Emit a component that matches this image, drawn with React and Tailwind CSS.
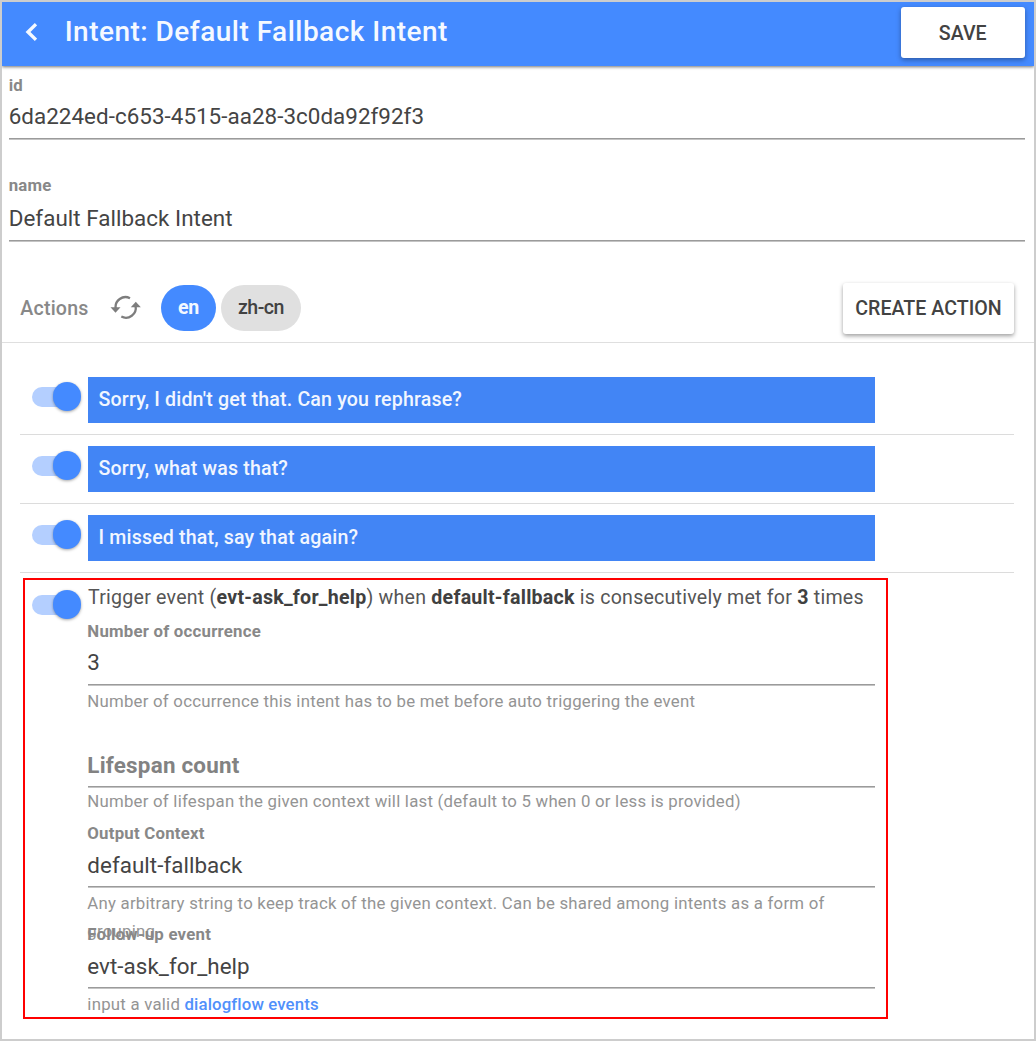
import React from "react";

function Toggle({ className = "" }) {
  return (
    <div className={"relative h-[30px] w-[50px] shrink-0 " + className}>
      <div className="absolute left-0 top-[5px] h-[20px] w-[48px] rounded-full bg-[#b4cfff]" />
      <div className="absolute left-[21px] top-0 size-[28.5px] rounded-full bg-[#448aff] shadow-[0_1px_3px_rgba(0,0,0,0.35)]" />
    </div>
  );
}

function Line() {
  return (
    <div>
      <div className="h-px bg-[#9b9b9b]" />
      <div className="h-px bg-[#c4c4c4]" />
    </div>
  );
}

function Field({ label, value, hint, big, className = "h-[101px]", valueClass = "pt-px mb-[6px]" }) {
  return (
    <div className={className}>
      <div className="-ml-[0.7px] h-[20px] text-[16.8px] font-bold leading-[20px] tracking-[0.23px] text-[#888888]">{label}</div>
      <div
        className={
          big
            ? "-ml-[0.7px] mb-[5px] mt-[7px] h-[32px] text-[22.4px] font-bold leading-[32px] tracking-[0.23px] text-[#828282]"
            : "-ml-[0.7px] mt-[5px] h-[32px] text-[22.4px] leading-[32px] tracking-[0.04px] text-[#444444] " + valueClass
        }
      >
        {value}
      </div>
      <Line />
      <div
        className={
          "-ml-[0.7px] text-[16.8px] leading-[28px] tracking-[0.235px] text-[#949494] " + (big ? "-mt-px" : "mt-px")
        }
      >
        {hint}
      </div>
    </div>
  );
}

function Response({ text, className = "" }) {
  return (
    <div className={"ml-[17.5px] mr-[20px] flex items-start border-b border-[#dcdcdc] pl-[12px] " + className}>
      <Toggle className="mt-[16px]" />
      <div className="ml-[6px] mt-[11px] h-[46px] w-[787px] bg-[#4285f5] pl-[11px] text-[19.6px] font-medium leading-[46px] tracking-[0.165px] text-[#f1f6ff]">
        {text}
      </div>
    </div>
  );
}

export default function App() {
  return (
    <div className="h-[1041px] w-[1036px] overflow-hidden border-2 border-[#cdcdcd] bg-white font-[Roboto,sans-serif]">
      <header className="relative flex h-[64px] items-start bg-[#448aff] shadow-[0_1px_3px_rgba(0,0,0,0.55)]">
        <svg className="ml-[21px] mt-[19px]" width="14" height="22" viewBox="0 0 14 22" fill="none" stroke="#f5f9ff" strokeWidth="3.4">
          <path d="M13 3.2 L5 11 L13 18.8" />
        </svg>
        <h1 className="ml-[27.7px] mt-[10px] text-[28px] font-medium leading-[40px] tracking-[0.477px] text-[#f5f9ff]">
          Intent: Default Fallback Intent
        </h1>
        <button className="ml-auto mr-[9.5px] mt-[5px] h-[51px] w-[123.5px] rounded-[3px] bg-white pt-[2px] text-[19.6px] font-medium text-[#424242] shadow-[0_2px_5px_rgba(0,0,0,0.35)]">
          SAVE
        </button>
      </header>

      <section className="pl-[7.4px] pr-[9.5px] pt-[9px]">
        <Field label="id" value="6da224ed-c653-4515-aa28-3c0da92f92f3" className="h-[100px]" valueClass="mb-[6px]" />
        <Field label="name" value="Default Fallback Intent" valueClass="pt-[2px] mb-[8px]" />
      </section>

      <div className="-mt-[2px] flex h-[69px] items-start border-b border-[#dfdfdf] pl-[18.3px] pr-[20px]">
        <span className="mt-[21px] text-[19.6px] font-medium leading-[28px] tracking-[0.2px] text-[#888888]">Actions</span>
        <svg className="ml-[21px] mt-[21px]" width="32" height="26" viewBox="0 0 32 26" fill="none" stroke="#7d7d7d" strokeWidth="2.3">
          <path d="M5.7 13.5 A9.9 9.9 0 0 1 20 3.2" />
          <path d="M25.6 11 A9.9 9.9 0 0 1 11.3 21.6" />
          <path d="M0.5 12.3 H10.5 L5.5 17.8 Z" fill="#7d7d7d" stroke="none" />
          <path d="M20.8 12.3 H30.8 L25.8 6.8 Z" fill="#7d7d7d" stroke="none" />
        </svg>
        <span className="ml-[19.4px] mt-[11px] h-[46px] w-[55px] rounded-full bg-[#448aff] text-center text-[19.6px] font-bold leading-[45px] tracking-[-0.3px] text-[#f3f8ff]">
          en
        </span>
        <span className="ml-[5px] mt-[11px] h-[46px] w-[80px] rounded-full bg-[#e0e0e0] text-center text-[19.6px] font-medium leading-[45px] tracking-[-0.5px] text-[#424242]">
          zh-cn
        </span>
        <button className="ml-auto mt-[9px] h-[50.5px] w-[171px] rounded-[3px] bg-white pt-px text-[19.6px] font-medium tracking-[0.03px] text-[#424242] shadow-[0_2px_4px_rgba(0,0,0,0.38)]">
          CREATE ACTION
        </button>
      </div>

      <div className="pt-[23px]">
        <Response text="Sorry, I didn't get that. Can you rephrase?" className="h-[69px]" />
        <Response text="Sorry, what was that?" className="h-[69px]" />
        <Response text="I missed that, say that again?" className="h-[69px]" />
      </div>

      <div className="ml-[21px] mt-[5px] flex h-[441px] w-[865px] items-start border-2 border-[#ff0000] pl-[6.5px]">
        <Toggle className="mt-[10px]" />
        <div className="ml-[6.5px] w-[786.5px] shrink-0">
          <p className="mt-[4px] h-[28px] whitespace-nowrap text-[19.6px] leading-[28px] tracking-[0.23px] text-[#555555]">
            Trigger event (<b className="font-bold text-[#404040]">evt-ask_for_help</b>) when{" "}
            <b className="font-bold text-[#404040]">default-fallback</b> is consecutively met for{" "}
            <b className="font-bold text-[#404040]">3</b> times
          </p>
          <div className="pt-[9px]">
            <Field
              label="Number of occurrence"
              value="3"
              valueClass="mb-[6px]"
              hint="Number of occurrence this intent has to be met before auto triggering the event"
            />
            <Field
              big
              value="Lifespan count"
              hint="Number of lifespan the given context will last (default to 5 when 0 or less is provided)"
            />
            <Field
              label="Output Context"
              value="default-fallback"
              hint="Any arbitrary string to keep track of the given context. Can be shared among intents as a form of grouping"
            />
            <Field
              label="Follow-up event"
              value="evt-ask_for_help"
              hint={
                <>
                  input a valid <a className="font-medium tracking-[0.12px] text-[#5090fb]">dialogflow events</a>
                </>
              }
            />
          </div>
        </div>
      </div>
    </div>
  );
}
